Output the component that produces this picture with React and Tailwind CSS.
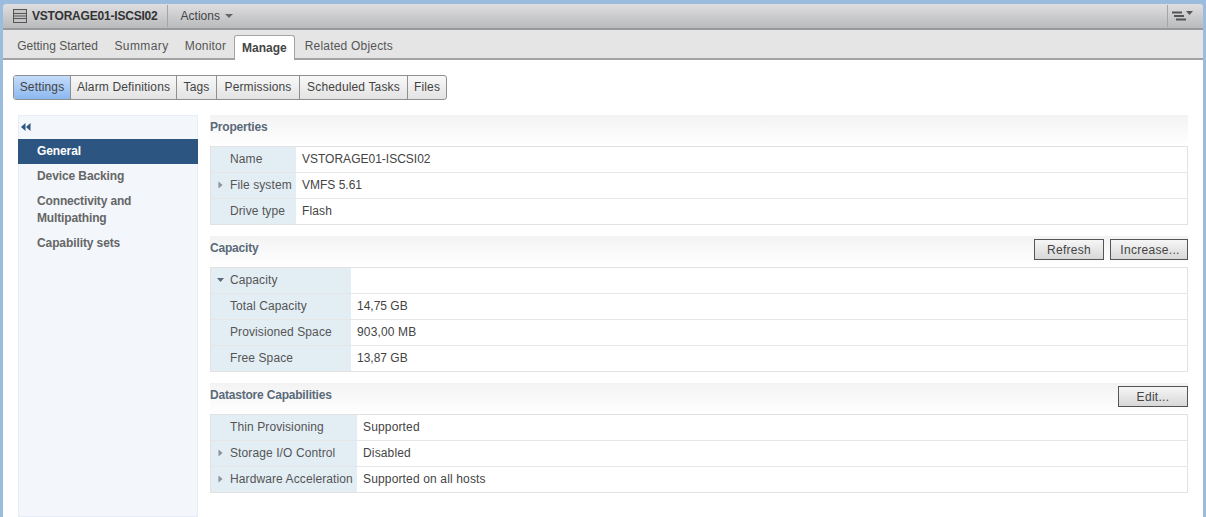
const subTabs = [
    { name: "Settings", cls: "w-[57px] rounded-l-[3px] bg-gradient-to-b from-[#c5dcfa] to-[#8bb8f0]" },
    { name: "Alarm Definitions", cls: "w-[106px]" },
    { name: "Tags", cls: "w-[40px]" },
    { name: "Permissions", cls: "w-[83px]" },
    { name: "Scheduled Tasks", cls: "w-[108px] tracking-[0.3px]" },
    { name: "Files", cls: "w-[38px]" },
];

const Arrow = ({ open }) => (
    <svg width="7" height="8" viewBox="0 0 7 8" className="shrink-0">
        {open ? <path d="M0 2h7L3.5 6z" fill="#5b6b7b" /> : <path d="M1.5 0.5v7L5.5 4z" fill="#8a9299" />}
    </svg>
);

const Btn = ({ children, className }) => (
    <button className={`h-[21px] border border-[#555] bg-gradient-to-b from-[#f6f6f6] to-[#d8d8d8] text-xs tracking-[0.3px] text-[#444] ${className}`}>
        {children}
    </button>
);

const SectionHead = ({ title, children }) => (
    <div className="flex h-[31px] justify-between bg-gradient-to-b from-[#f3f3f3] to-white">
        <span className="pt-[4px] text-xs font-bold tracking-[-0.2px] text-[#5a6a7a]">{title}</span>
        {children}
    </div>
);

const Row = ({ label, value, w, arrow, open, tight }) => (
    <div className="flex h-[26px] border-b border-[#e6e6e6] last:h-[25px] last:border-b-0">
        <div className={`flex items-center bg-[#e3edf4] pb-[2px] pl-[6px] text-xs tracking-[0.1px] text-[#555] ${w}`}>
            <div className="flex w-[13px]">{arrow && <Arrow open={open} />}</div>
            <span className="whitespace-nowrap">{label}</span>
        </div>
        <div className={`flex items-center pb-[2px] pl-[6px] text-xs text-[#444] ${tight ? "" : "tracking-[0.15px]"}`}>{value}</div>
    </div>
);

const Table = ({ children }) => (
    <div className="border border-[#e2e2e2]">{children}</div>
);

export default function App() {
    return (
        <div className="h-[517px] overflow-hidden bg-[#9bbcdc] px-[3px] pt-[4px] font-['Liberation_Sans',Arial,sans-serif]">
            <div className="flex h-[26px] items-center rounded-t-[3px] border-b-2 border-[#999] bg-gradient-to-b from-[#dfdfe2] to-[#b9babc] pl-[10px]">
                <svg width="14" height="14" viewBox="0 0 14 14" className="shrink-0">
                    <rect x="0.5" y="0.5" width="13" height="13" fill="#c4c4c4" stroke="#555" />
                    <path d="M1 4.5h12M1 7h12M1 9.5h12" stroke="#555" />
                </svg>
                <span className="ml-[5px] text-xs font-bold tracking-[-0.2px] text-[#333]">VSTORAGE01-ISCSI02</span>
                <div className="ml-[9px] h-[22px] w-px bg-[#a5a5a5]" />
                <span className="ml-[13px] text-xs text-[#444]">Actions</span>
                <svg width="8" height="4" viewBox="0 0 8 4" className="ml-[5px]"><path d="M0 0h8L4 4z" fill="#666" /></svg>
                <div className="ml-auto flex h-[22px] w-[36px] items-center border-l border-[#a5a5a5] pl-[4px]">
                    <svg width="22" height="10" viewBox="0 0 22 10">
                        <path d="M0 1.5h10M2 5h10M4 8.5h10" stroke="#555" strokeWidth="2" />
                        <path d="M14 0h7l-3.5 4z" fill="#555" />
                    </svg>
                </div>
            </div>

            <div className="flex h-[30px] items-end border-b-2 border-[#a3a3a3] bg-[#e5e5e5] pl-[6px] text-xs text-[#555]">
                <div className="flex h-[24px] w-[97px] items-center justify-center">Getting Started</div>
                <div className="flex h-[24px] w-[71px] items-center justify-center tracking-[0.4px]">Summary</div>
                <div className="flex h-[24px] w-[57px] items-center justify-center tracking-[0.2px]">Monitor</div>
                <div className="relative top-[2px] mr-[2px] flex h-[25px] items-center rounded-t-[3px] border border-b-0 border-[#a3a3a3] bg-white px-[7px] font-bold text-[#444]">
                    Manage
                </div>
                <div className="flex h-[24px] items-center px-[8px] tracking-[0.2px]">Related Objects</div>
            </div>

            <div className="h-[457px] bg-white pl-[10px] pr-[15px] pt-[15px]">
                <div className="flex h-[25px] w-fit rounded-[3px] border border-[#8f8f8f] bg-gradient-to-b from-[#f8f8f8] to-[#e3e3e3]">
                    {subTabs.map((tab) => (
                        <div key={tab.name} className={`flex items-center justify-center border-r border-[#8f8f8f] pb-[2px] text-xs tracking-[0.15px] text-[#444] last:border-r-0 ${tab.cls}`}>
                            {tab.name}
                        </div>
                    ))}
                </div>

                <div className="mt-[15px] flex gap-[12px]">
                    <div className="ml-[5px] h-[402px] w-[180px] shrink-0 border border-[#e6edf6] bg-[#f3f6fb]">
                        <div className="flex h-[23px] items-center pb-[2px] pl-[2px]">
                            <svg width="10" height="8" viewBox="0 0 10 8">
                                <path d="M4.5 0v8L0 4zM9.5 0v8L5 4z" fill="#2c5581" />
                            </svg>
                        </div>
                        <div className="-mx-px flex h-[25px] items-center bg-[#2c5581] pb-[2px] pl-[19px] text-xs font-bold tracking-[-0.1px] text-white">General</div>
                        <div className="flex h-[25px] items-center pb-[2px] pl-[18px] text-xs font-bold tracking-[-0.1px] text-[#666]">Device Backing</div>
                        <div className="flex flex-col py-[4px] pl-[18px] text-xs font-bold leading-[17px] tracking-[-0.15px] text-[#666]">
                            <span>Connectivity and</span>
                            <span>Multipathing</span>
                        </div>
                        <div className="flex h-[25px] items-center pb-[2px] pl-[18px] text-xs font-bold tracking-[-0.1px] text-[#666]">Capability sets</div>
                    </div>

                    <div className="flex-1">
                        <SectionHead title="Properties" />
                        <Table>
                            <Row w="w-[85px]" label="Name" value="VSTORAGE01-ISCSI02" tight />
                            <Row w="w-[85px]" label="File system" value="VMFS 5.61" arrow tight />
                            <Row w="w-[85px]" label="Drive type" value="Flash" />
                        </Table>

                        <div className="mt-[11px]">
                            <SectionHead title="Capacity">
                                <div className="flex gap-[6px] pt-[3px]">
                                    <Btn className="w-[70px]">Refresh</Btn>
                                    <Btn className="w-[78px] pl-[2px] tracking-[0.2px]">Increase...</Btn>
                                </div>
                            </SectionHead>
                        </div>
                        <Table>
                            <Row w="w-[140px]" label="Capacity" value="" arrow open />
                            <Row w="w-[140px]" label="Total Capacity" value="14,75 GB" tight />
                            <Row w="w-[140px]" label="Provisioned Space" value="903,00 MB" />
                            <Row w="w-[140px]" label="Free Space" value="13,87 GB" tight />
                        </Table>

                        <div className="mt-[11px]">
                            <SectionHead title="Datastore Capabilities">
                                <Btn className="mt-[3px] w-[70px]">Edit...</Btn>
                            </SectionHead>
                        </div>
                        <Table>
                            <Row w="w-[146px]" label="Thin Provisioning" value="Supported" />
                            <Row w="w-[146px]" label="Storage I/O Control" value="Disabled" arrow />
                            <Row w="w-[146px]" label="Hardware Acceleration" value="Supported on all hosts" arrow />
                        </Table>
                    </div>
                </div>
            </div>
        </div>
    );
}
